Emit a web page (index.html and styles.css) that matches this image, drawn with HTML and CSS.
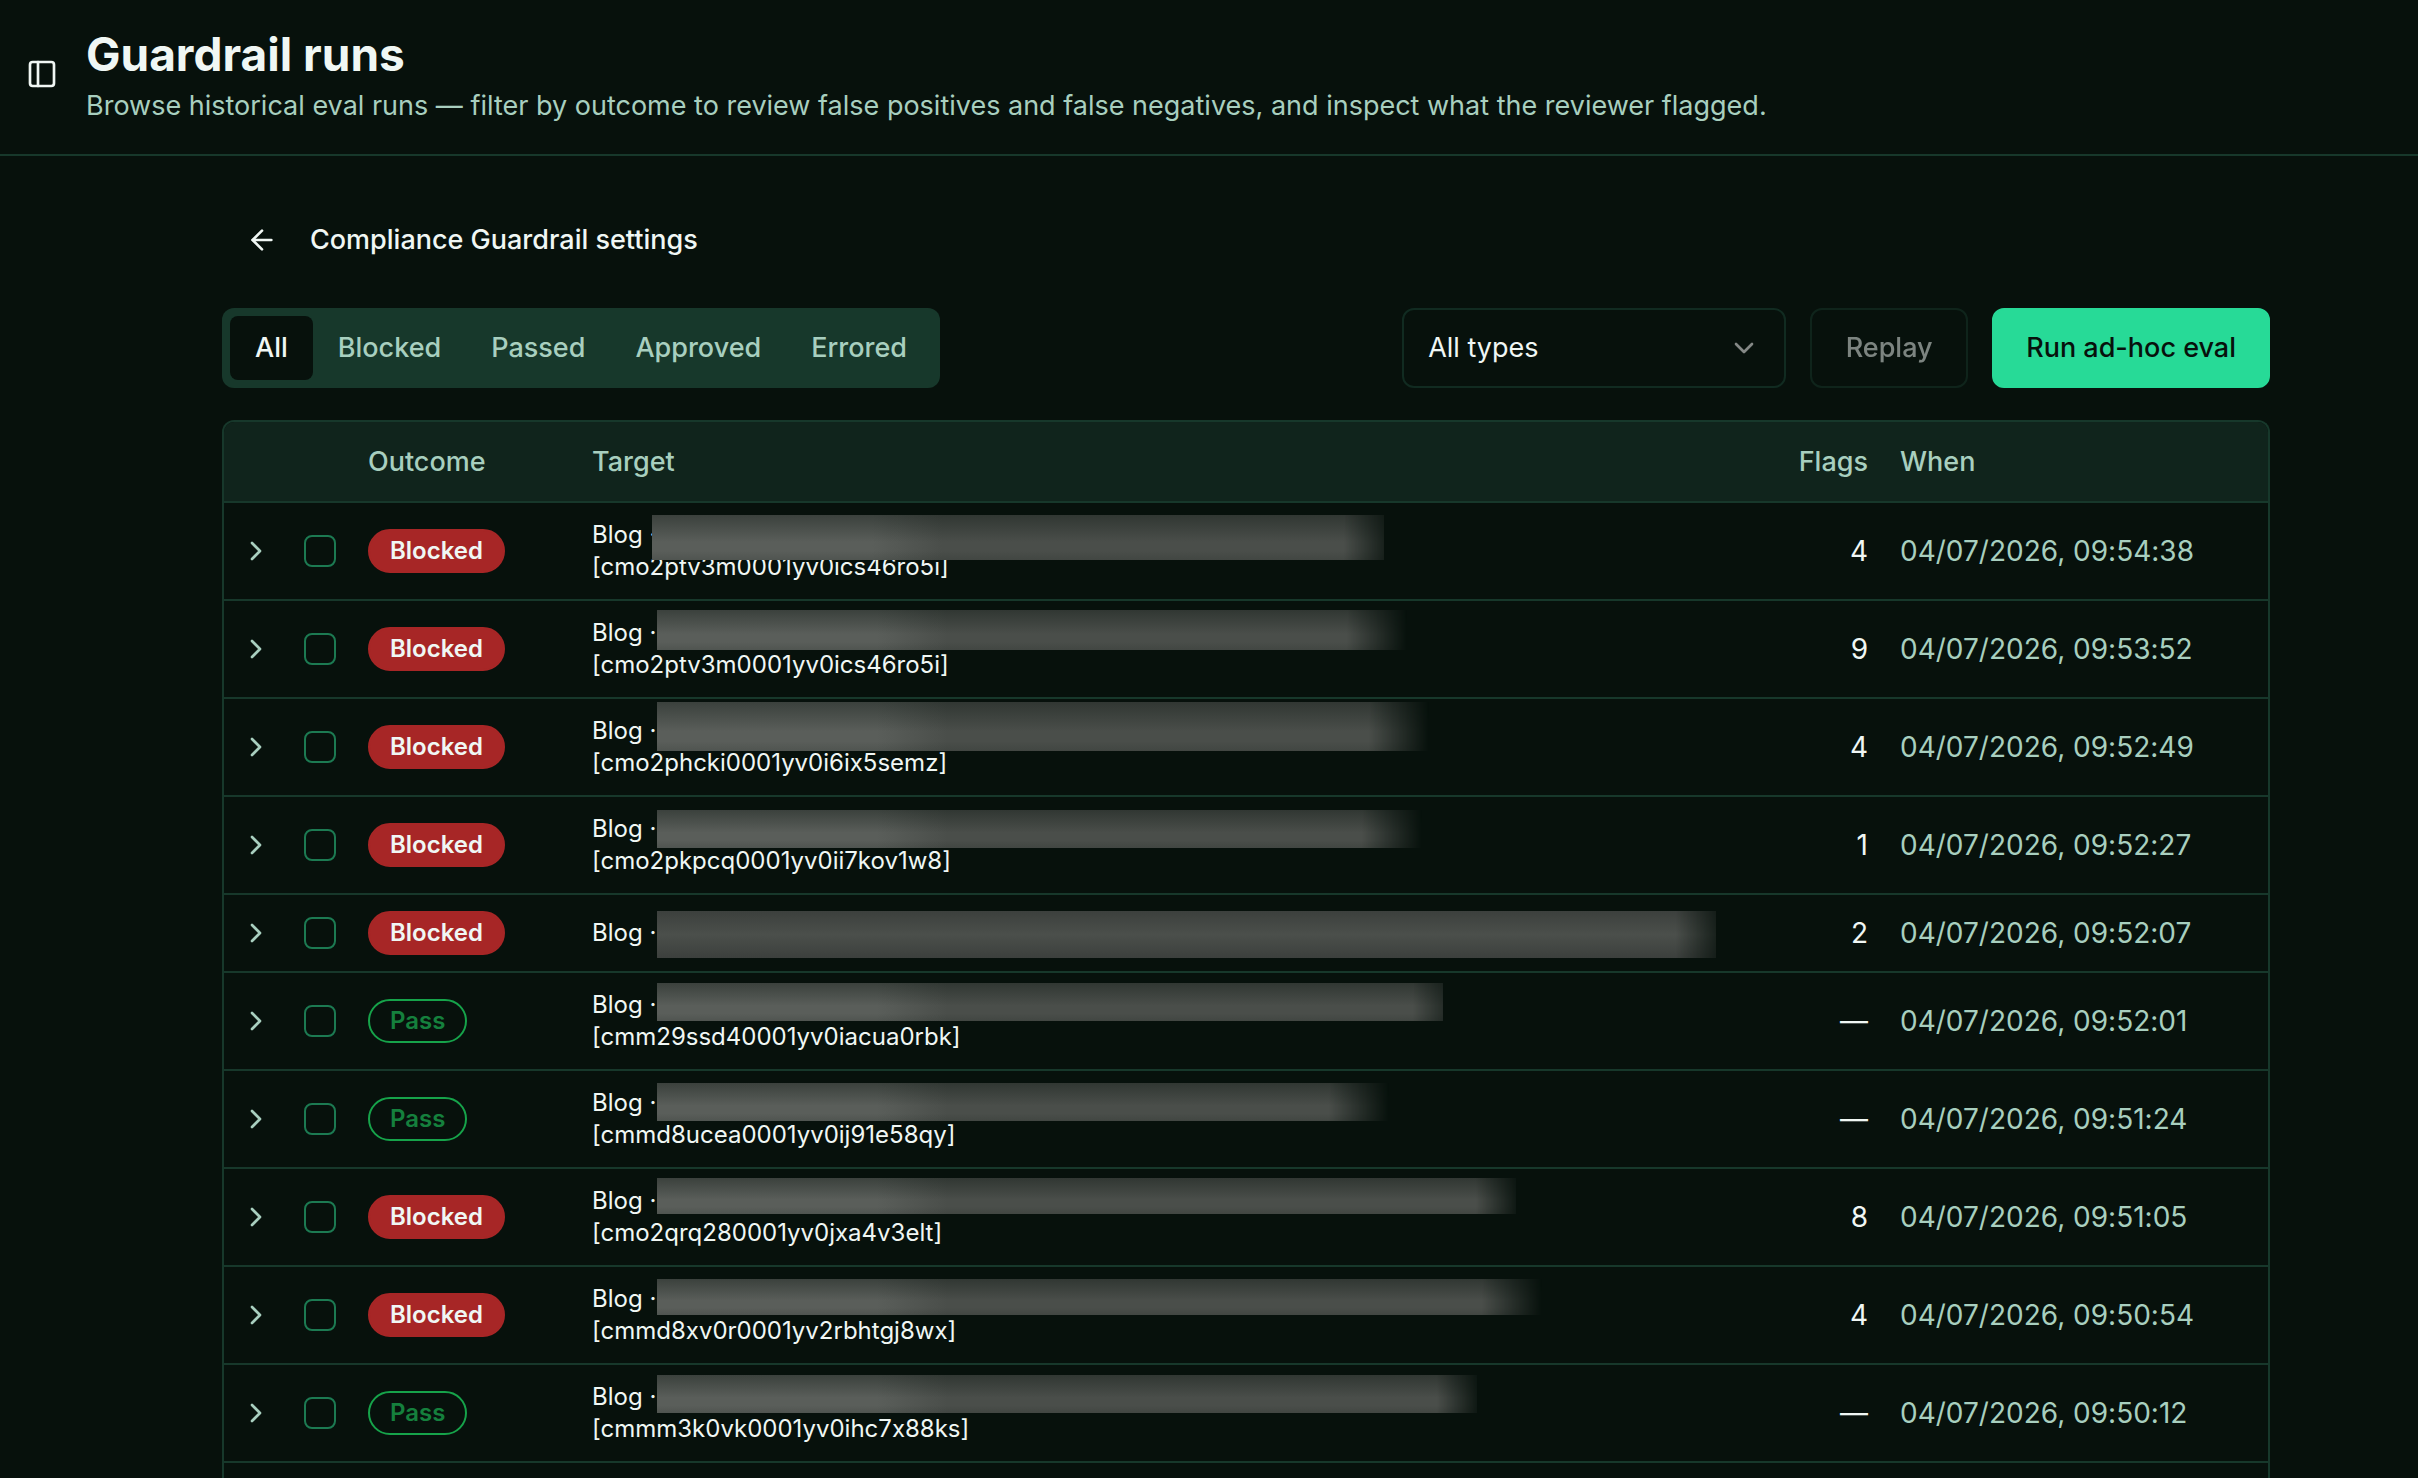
FILE: index.html
```html
<!DOCTYPE html>
<html lang="en">
<head>
<meta charset="utf-8">
<meta name="viewport" content="width=device-width, initial-scale=1">
<title>Guardrail runs</title>
<link rel="stylesheet" href="styles.css">
</head>
<body>
<svg class="sprite" aria-hidden="true">
  <symbol id="chevron-right" viewBox="0 0 24 24"><path d="m9 18 6-6-6-6"/></symbol>
  <symbol id="chevron-down" viewBox="0 0 24 24"><path d="m6 9 6 6 6-6"/></symbol>
  <symbol id="arrow-left" viewBox="0 0 24 24"><path d="m12 19-7-7 7-7"/><path d="M19 12H5"/></symbol>
  <symbol id="panel-left" viewBox="0 0 24 24"><rect width="18" height="18" x="3" y="3" rx="2"/><path d="M9 3v18"/></symbol>
</svg>
<header class="page-header">
  <button class="icon-button" type="button" aria-label="Toggle sidebar"><svg class="icon"><use href="#panel-left"/></svg></button>
  <div class="heading">
    <h1>Guardrail runs</h1>
    <p>Browse historical eval runs — filter by outcome to review false positives and false negatives, and inspect what the reviewer flagged.</p>
  </div>
</header>
<main class="content">
  <a class="back" href="#settings"><svg class="icon"><use href="#arrow-left"/></svg>Compliance Guardrail settings</a>
  <div class="toolbar">
    <div class="tabs" role="tablist">
      <button class="tab active" type="button" role="tab" aria-selected="true">All</button>
      <button class="tab" type="button" role="tab">Blocked</button>
      <button class="tab" type="button" role="tab">Passed</button>
      <button class="tab" type="button" role="tab">Approved</button>
      <button class="tab" type="button" role="tab">Errored</button>
    </div>
    <div class="actions">
      <div class="select">
        <select aria-label="Type"><option>All types</option></select>
        <svg class="icon"><use href="#chevron-down"/></svg>
      </div>
      <button class="button outline" type="button" disabled>Replay</button>
      <button class="button primary" type="button">Run ad-hoc eval</button>
    </div>
  </div>
  <div class="card">
    <table class="runs">
      <colgroup><col class="c-icon"><col class="c-icon"><col class="c-outcome"><col><col class="c-flags"><col class="c-when"></colgroup>
      <thead>
        <tr><th></th><th></th><th>Outcome</th><th>Target</th><th class="num">Flags</th><th>When</th></tr>
      </thead>
      <tbody>
        <tr><td><button class="expand" type="button" aria-label="Expand"><svg class="icon"><use href="#chevron-right"/></svg></button></td><td><input type="checkbox" aria-label="Select run"></td><td><span class="badge blocked">Blocked</span></td><td><div class="target">Blog ·<br>[cmo2ptv3m0001yv0ics46ro5i]<span class="redacted"></span></div></td><td class="num">4</td><td class="when">04/07/2026, 09:54:38</td></tr>
        <tr><td><button class="expand" type="button" aria-label="Expand"><svg class="icon"><use href="#chevron-right"/></svg></button></td><td><input type="checkbox" aria-label="Select run"></td><td><span class="badge blocked">Blocked</span></td><td><div class="target">Blog ·<br>[cmo2ptv3m0001yv0ics46ro5i]<span class="redacted"></span></div></td><td class="num">9</td><td class="when">04/07/2026, 09:53:52</td></tr>
        <tr><td><button class="expand" type="button" aria-label="Expand"><svg class="icon"><use href="#chevron-right"/></svg></button></td><td><input type="checkbox" aria-label="Select run"></td><td><span class="badge blocked">Blocked</span></td><td><div class="target">Blog ·<br>[cmo2phcki0001yv0i6ix5semz]<span class="redacted"></span></div></td><td class="num">4</td><td class="when">04/07/2026, 09:52:49</td></tr>
        <tr><td><button class="expand" type="button" aria-label="Expand"><svg class="icon"><use href="#chevron-right"/></svg></button></td><td><input type="checkbox" aria-label="Select run"></td><td><span class="badge blocked">Blocked</span></td><td><div class="target">Blog ·<br>[cmo2pkpcq0001yv0ii7kov1w8]<span class="redacted"></span></div></td><td class="num">1</td><td class="when">04/07/2026, 09:52:27</td></tr>
        <tr><td><button class="expand" type="button" aria-label="Expand"><svg class="icon"><use href="#chevron-right"/></svg></button></td><td><input type="checkbox" aria-label="Select run"></td><td><span class="badge blocked">Blocked</span></td><td><div class="target">Blog ·<span class="redacted"></span></div></td><td class="num">2</td><td class="when">04/07/2026, 09:52:07</td></tr>
        <tr><td><button class="expand" type="button" aria-label="Expand"><svg class="icon"><use href="#chevron-right"/></svg></button></td><td><input type="checkbox" aria-label="Select run"></td><td><span class="badge pass">Pass</span></td><td><div class="target">Blog ·<br>[cmm29ssd40001yv0iacua0rbk]<span class="redacted"></span></div></td><td class="num">—</td><td class="when">04/07/2026, 09:52:01</td></tr>
        <tr><td><button class="expand" type="button" aria-label="Expand"><svg class="icon"><use href="#chevron-right"/></svg></button></td><td><input type="checkbox" aria-label="Select run"></td><td><span class="badge pass">Pass</span></td><td><div class="target">Blog ·<br>[cmmd8ucea0001yv0ij91e58qy]<span class="redacted"></span></div></td><td class="num">—</td><td class="when">04/07/2026, 09:51:24</td></tr>
        <tr><td><button class="expand" type="button" aria-label="Expand"><svg class="icon"><use href="#chevron-right"/></svg></button></td><td><input type="checkbox" aria-label="Select run"></td><td><span class="badge blocked">Blocked</span></td><td><div class="target">Blog ·<br>[cmo2qrq280001yv0jxa4v3elt]<span class="redacted"></span></div></td><td class="num">8</td><td class="when">04/07/2026, 09:51:05</td></tr>
        <tr><td><button class="expand" type="button" aria-label="Expand"><svg class="icon"><use href="#chevron-right"/></svg></button></td><td><input type="checkbox" aria-label="Select run"></td><td><span class="badge blocked">Blocked</span></td><td><div class="target">Blog ·<br>[cmmd8xv0r0001yv2rbhtgj8wx]<span class="redacted"></span></div></td><td class="num">4</td><td class="when">04/07/2026, 09:50:54</td></tr>
        <tr><td><button class="expand" type="button" aria-label="Expand"><svg class="icon"><use href="#chevron-right"/></svg></button></td><td><input type="checkbox" aria-label="Select run"></td><td><span class="badge pass">Pass</span></td><td><div class="target">Blog ·<br>[cmmm3k0vk0001yv0ihc7x88ks]<span class="redacted"></span></div></td><td class="num">—</td><td class="when">04/07/2026, 09:50:12</td></tr>
      </tbody>
    </table>
  </div>
</main>
</body>
</html>
```
FILE: styles.css
```css
:root {
  --bg: #07110c;
  --fg: #f0f7f4;
  --muted: #a8cfbf;
  --line: #17382b;
  --primary: #27da97;
}

* { box-sizing: border-box; }

body {
  margin: 0;
  min-height: 100vh;
  overflow: hidden;
  background: var(--bg);
  color: var(--fg);
  font: 400 27px/40px Inter, "Liberation Sans", sans-serif;
  font-feature-settings: "calt" 0;
}

button, select, input { font: inherit; color: inherit; margin: 0; }
button { border: 0; padding: 0; background: none; }

.sprite { position: absolute; width: 0; height: 0; }

.icon {
  display: block;
  width: 32px;
  height: 32px;
  flex: none;
  fill: none;
  stroke: currentColor;
  stroke-width: 2;
  stroke-linecap: round;
  stroke-linejoin: round;
}

.page-header {
  display: flex;
  align-items: center;
  gap: 28px;
  padding: 22px 26px 28px;
  border-bottom: 2px solid var(--line);
}

h1 { margin: 0; font-size: 46px; line-height: 64px; font-weight: 700; }
.heading p { margin: 0; color: var(--muted); }

.content {
  max-width: 2122px;
  margin: 0 auto;
  padding: 44px 0 0 74px;
}

.back {
  display: flex;
  align-items: center;
  gap: 32px;
  width: max-content;
  height: 80px;
  padding: 0 24px;
  color: inherit;
  font-weight: 500;
  text-decoration: none;
}

.toolbar {
  display: flex;
  justify-content: space-between;
  margin: 28px 0 32px;
}

.tabs {
  display: flex;
  padding: 8px;
  border-radius: 12px;
  background: var(--line);
  color: var(--muted);
  font-weight: 500;
}
.tab { height: 64px; padding: 0 25px; border-radius: 8px; }
.tab.active { background: var(--bg); color: var(--fg); }

.actions { display: flex; gap: 24px; }

.select { display: grid; align-items: center; width: 384px; }
.select > * { grid-area: 1 / 1; }
.select select {
  appearance: none;
  width: 100%;
  height: 80px;
  padding: 0 24px;
  border: 2px solid #112b21;
  border-radius: 12px;
  background: var(--bg);
}
.select .icon { justify-self: end; margin-right: 26px; color: #848886; pointer-events: none; }

.button {
  height: 80px;
  padding: 0 32px;
  border: 2px solid var(--line);
  border-radius: 12px;
  font-weight: 500;
}
.outline { min-width: 158px; opacity: 0.5; }
.primary { background: var(--primary); border-color: var(--primary); color: var(--bg); }

.card {
  overflow: hidden;
  padding-bottom: 16px;
  border: 2px solid var(--line);
  border-bottom: 0;
  border-radius: 12px 12px 0 0;
}

.runs { width: 100%; table-layout: fixed; border-collapse: separate; border-spacing: 0; }
.c-icon { width: 64px; }
.c-outcome { width: 224px; }
.c-flags { width: 144px; }
.c-when { width: 384px; }

th {
  height: 81px;
  padding: 0 16px;
  border-bottom: 2px solid var(--line);
  background: #10241c;
  color: var(--muted);
  font-weight: 500;
  text-align: left;
}
td { padding: 16px; border-bottom: 2px solid var(--line); vertical-align: middle; }
.runs .num { text-align: right; }
td.num, td.when { padding-top: 0; padding-bottom: 0; font-size: 28px; }
td.when { color: var(--muted); }

.expand { display: block; color: var(--muted); }

input[type="checkbox"] {
  appearance: none;
  display: block;
  width: 32px;
  height: 32px;
  border: 2px solid #1c7a52;
  border-radius: 8px;
}

.badge {
  display: block;
  width: max-content;
  padding: 4px 20px;
  border: 2px solid transparent;
  border-radius: 22px;
  font-size: 24px;
  line-height: 32px;
  font-weight: 600;
}
.blocked { background: #a72626; border-color: #a72626; }
.pass { border-color: #16a34a; color: #15803d; }

.target { position: relative; font-size: 24px; line-height: 32px; }

/* Smudge laid over the private part of each target title. */
.redacted {
  --fade: 60px;
  --end: transparent;
  position: absolute;
  left: 65px;
  top: -6px;
  width: 750px;
  height: 38px;
  background:
    linear-gradient(to bottom, #07110c60, transparent 60%, transparent 80%, #07110c20),
    linear-gradient(to right, #5a5e5a 220px, #4a4e4a 290px);
  mask-image: linear-gradient(to right, #000 calc(100% - var(--fade)), var(--end));
}
tr:nth-child(1) .redacted { left: 60px; top: -4px; width: 732px; height: 45px; --fade: 40px; --end: #0004; }
tr:nth-child(2) .redacted { top: -7px; width: 750px; height: 40px; }
tr:nth-child(3) .redacted { top: -13px; width: 772px; height: 49px; }
tr:nth-child(4) .redacted { top: -3px; width: 765px; }
tr:nth-child(5) .redacted {
  width: 1059px;
  height: 47px;
  --fade: 40px;
  --end: #0004;
  background: linear-gradient(to bottom, #3c403d, #4b4f4b 50%, #3c403d);
}
tr:nth-child(6) .redacted { width: 786px; --fade: 30px; --end: #0007; }
tr:nth-child(7) .redacted { top: -4px; width: 732px; }
tr:nth-child(8) .redacted { top: -7px; width: 859px; height: 36px; --fade: 40px; --end: #0002; }
tr:nth-child(9) .redacted { top: -4px; width: 885px; height: 36px; }
tr:nth-child(10) .redacted { width: 820px; --fade: 40px; --end: #0002; }
```
